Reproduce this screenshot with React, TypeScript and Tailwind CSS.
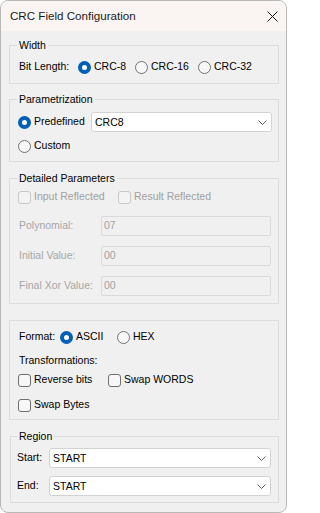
import React from "react";

const F = "font-['Liberation_Sans',Arial,sans-serif]";

function Radio({ checked }: { checked?: boolean }) {
  return checked ? (
    <span className="w-[13px] h-[13px] shrink-0 rounded-full bg-[#005fb8] flex items-center justify-center">
      <span className="w-[5px] h-[5px] rounded-full bg-white" />
    </span>
  ) : (
    <span className="w-[13px] h-[13px] shrink-0 rounded-full border border-[#727272] bg-[#f7f7f7]" />
  );
}

function Check({ disabled }: { disabled?: boolean }) {
  return (
    <span
      className={
        disabled
          ? "w-[13px] h-[13px] shrink-0 rounded-[3px] border border-[#c8c8c8] bg-[#f3f3f3]"
          : "w-[13px] h-[13px] shrink-0 rounded-[3px] border border-[#6e6e6e] bg-[#f7f7f7]"
      }
    />
  );
}

function Chevron() {
  return (
    <svg width="9" height="5" viewBox="0 0 9 5" className="shrink-0">
      <path d="M0.5 0.5 L4.5 4.5 L8.5 0.5" fill="none" stroke="#606060" strokeWidth="1" />
    </svg>
  );
}

function Combo({ value, w }: { value: string; w: string }) {
  return (
    <div className={`flex items-center h-[20px] ${w} bg-white border border-[#d3d3d3] rounded-[3px] pl-[3px] pr-[4px]`}>
      <span className="flex-1 leading-[13px]">{value}</span>
      <Chevron />
    </div>
  );
}

function Legend({ children, ml = "ml-[7px]" }: { children: React.ReactNode; ml?: string }) {
  return <div className={`-mt-[7px] ${ml} w-fit px-[2px] bg-[#f0f0f0] leading-[13px] text-black`}>{children}</div>;
}

function Field({ label, value }: { label: string; value: string }) {
  return (
    <div className="flex items-center h-[20px] pl-[9px]">
      <span className="w-[82px] text-[#a6a6a6]">{label}</span>
      <div className="w-[170px] h-[20px] border border-[#dadada] rounded-[2px] bg-[#f0f0f0] flex items-center pl-[2px] text-[#a0a0a0]">
        {value}
      </div>
    </div>
  );
}

export default function App() {
  return (
    <div className={`${F} text-[10.5px] text-black bg-white w-[289px] h-[513px]`}>
      <div className="w-[287px] h-[513px] border border-[#b8b8b8] rounded-[8px] overflow-hidden bg-[#f0f0f0] flex flex-col">
        {/* Title bar */}
        <div className="h-[30px] shrink-0 bg-[#faf5f3] flex items-center pl-[9px] pr-[8px]">
          <span className="flex-1 text-[11.6px] text-[#1a1a1a]">CRC Field Configuration</span>
          <svg width="11" height="11" viewBox="0 0 11 11">
            <path d="M0.5 0.5 L10.5 10.5 M10.5 0.5 L0.5 10.5" stroke="#1a1a1a" strokeWidth="1" fill="none" />
          </svg>
        </div>

        {/* Width */}
        <div className="mt-[14px] ml-[8px] w-[270px] border border-[#dcdcdc] pb-[6px]">
          <Legend>Width</Legend>
          <div className="mt-[5px] h-[20px] flex items-center pl-[9px]">
            <span className="w-[59px]">Bit Length:</span>
            <div className="w-[57px] flex items-center gap-[3px]">
              <Radio checked />
              <span>CRC-8</span>
            </div>
            <div className="w-[63px] flex items-center gap-[3px]">
              <Radio />
              <span>CRC-16</span>
            </div>
            <div className="flex items-center gap-[3px]">
              <Radio />
              <span>CRC-32</span>
            </div>
          </div>
        </div>

        {/* Parametrization */}
        <div className="mt-[15px] ml-[8px] w-[270px] border border-[#dcdcdc] pb-[5px]">
          <Legend>Parametrization</Legend>
          <div className="mt-[6px] h-[20px] flex items-center pl-[8px]">
            <div className="w-[73px] flex items-center gap-[3px]">
              <Radio checked />
              <span>Predefined</span>
            </div>
            <Combo value="CRC8" w="w-[181px]" />
          </div>
          <div className="mt-[4px] h-[20px] flex items-center pl-[8px] gap-[3px]">
            <Radio />
            <span>Custom</span>
          </div>
        </div>

        {/* Detailed Parameters */}
        <div className="mt-[16px] ml-[8px] w-[270px] border border-[#dcdcdc] pb-[7px]">
          <Legend>Detailed Parameters</Legend>
          <div className="mt-[2px] h-[20px] flex items-center pl-[8px] text-[#a0a0a0]">
            <div className="w-[100px] flex items-center gap-[3px]">
              <Check disabled />
              <span>Input Reflected</span>
            </div>
            <div className="flex items-center gap-[3px]">
              <Check disabled />
              <span>Result Reflected</span>
            </div>
          </div>
          <div className="mt-[9px]">
            <Field label="Polynomial:" value="07" />
          </div>
          <div className="mt-[10px]">
            <Field label="Initial Value:" value="00" />
          </div>
          <div className="mt-[10px]">
            <Field label="Final Xor Value:" value="00" />
          </div>
        </div>

        {/* Format */}
        <div className="mt-[16px] ml-[8px] w-[270px] border border-[#dcdcdc] pt-[6px] pb-[4px]">
          <div className="h-[20px] flex items-center pl-[9px]">
            <span className="w-[41px]">Format:</span>
            <div className="w-[57px] flex items-center gap-[3px]">
              <Radio checked />
              <span>ASCII</span>
            </div>
            <div className="flex items-center gap-[3px]">
              <Radio />
              <span>HEX</span>
            </div>
          </div>
          <div className="mt-[6px] h-[16px] flex items-center pl-[9px]">Transformations:</div>
          <div className="mt-[1px] h-[20px] flex items-center pl-[8px]">
            <div className="w-[90px] flex items-center gap-[3px]">
              <Check />
              <span>Reverse bits</span>
            </div>
            <div className="flex items-center gap-[3px]">
              <Check />
              <span>Swap WORDS</span>
            </div>
          </div>
          <div className="mt-[5px] h-[20px] flex items-center pl-[8px] gap-[3px]">
            <Check />
            <span>Swap Bytes</span>
          </div>
        </div>

        {/* Region */}
        <div className="mt-[16px] ml-[9px] w-[269px] border border-[#dcdcdc] pb-[6px]">
          <Legend ml="ml-[6px]">Region</Legend>
          <div className="mt-[5px] h-[20px] flex items-center pl-[6px]">
            <span className="w-[32px]">Start:</span>
            <Combo value="START" w="w-[222px]" />
          </div>
          <div className="mt-[8px] h-[20px] flex items-center pl-[6px]">
            <span className="w-[32px]">End:</span>
            <Combo value="START" w="w-[222px]" />
          </div>
        </div>
      </div>
    </div>
  );
}
